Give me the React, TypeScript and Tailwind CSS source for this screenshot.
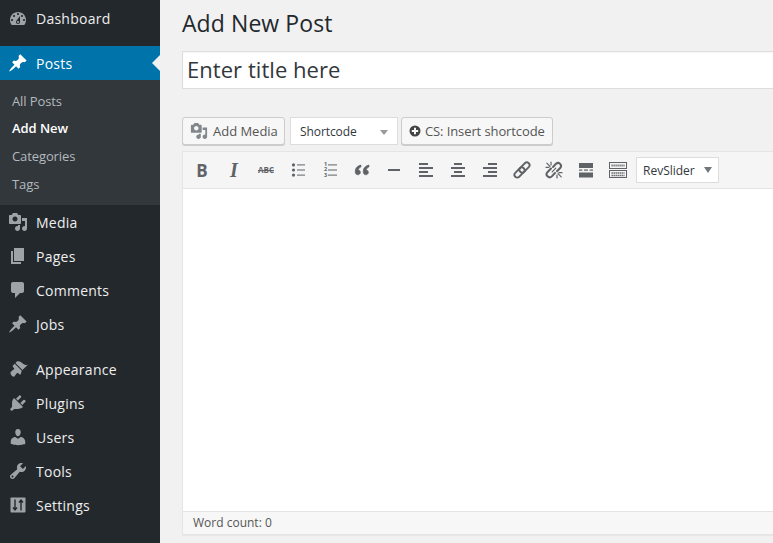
import React from "react";

const paths: Record<string, string> = {
  dashboard:
    "M3.76 16h12.48c1.1-1.37 1.76-3.11 1.76-5 0-4.42-3.58-8-8-8s-8 3.58-8 8c0 1.89.66 3.63 1.76 5zM10 4c.55 0 1 .45 1 1s-.45 1-1 1-1-.45-1-1 .45-1 1-1zM6 6c.55 0 1 .45 1 1s-.45 1-1 1-1-.45-1-1 .45-1 1-1zm8 0c.55 0 1 .45 1 1s-.45 1-1 1-1-.45-1-1 .45-1 1-1zm-5.37 5.55L12 7v6c0 1.1-.9 2-2 2s-2-.9-2-2c0-.57.24-1.08.63-1.45zM4 10c.55 0 1 .45 1 1s-.45 1-1 1-1-.45-1-1 .45-1 1-1zm12 0c.55 0 1 .45 1 1s-.45 1-1 1-1-.45-1-1 .45-1 1-1zm-5 3c0-.55-.45-1-1-1s-1 .45-1 1 .45 1 1 1 1-.45 1-1z",
  pin: "M10.44 3.02l1.82-1.82 6.36 6.35-1.83 1.82c-1.05-.68-2.48-.57-3.41.36l-.75.75c-.92.93-1.04 2.35-.35 3.41l-1.83 1.82-2.41-2.41-2.8 2.79c-.42.42-3.38 2.71-3.8 2.29s1.86-3.39 2.28-3.81l2.79-2.79L4.1 9.36l1.83-1.82c1.05.69 2.48.57 3.4-.36l.75-.75c.93-.92 1.05-2.35.36-3.41z",
  media:
    "M13 11V4c0-.55-.45-1-1-1h-1.67L9 1H5L3.67 3H2c-.55 0-1 .45-1 1v7c0 .55.45 1 1 1h10c.55 0 1-.45 1-1zM7 4.5c1.38 0 2.5 1.12 2.5 2.5S8.38 9.5 7 9.5 4.5 8.38 4.5 7 5.62 4.5 7 4.5zM14 6h5v10.5c0 1.38-1.12 2.5-2.5 2.5S14 17.88 14 16.5s1.12-2.5 2.5-2.5c.17 0 .34.02.5.05V9h-3V6zm-4 8.05V13h2v3.5c0 1.38-1.12 2.5-2.5 2.5S7 17.88 7 16.5 8.12 14 9.5 14c.17 0 .34.02.5.05z",
  pages: "M6 15V2h10v13H6zm-1 1h8v2H3V5h2v11z",
  comments:
    "M5 2h9c1.1 0 2 .9 2 2v7c0 1.1-.9 2-2 2h-2l-5 5v-5H5c-1.1 0-2-.9-2-2V4c0-1.1.9-2 2-2z",
  appearance:
    "M14.48 11.06L7.41 3.99l1.5-1.5c.5-.56 2.3-.47 3.51.32 1.21.8 1.43 1.28 2.91 2.1 1.18.64 2.45 1.26 4.45.85zm-.71.71L6.7 4.7 4.93 6.47c-.39.39-.39 1.02 0 1.41l1.06 1.06c.39.39.39 1.03 0 1.42-.6.6-1.43 1.11-2.21 1.69-.35.26-.7.53-1.01.84C1.43 14.84 5.16 18.57 6.31 17.43c.31-.31.58-.66.84-1.01.58-.78 1.09-1.61 1.69-2.21.39-.39 1.03-.39 1.42 0l1.06 1.06c.39.39 1.02.39 1.41 0z",
  plugins:
    "M13.11 4.36L9.87 7.6 8 5.73l3.24-3.24c.35-.34 1.05-.2 1.56.32.52.51.66 1.21.31 1.55zm-8 1.77l.91-1.12 9.01 9.01-1.19.84c-.71.71-2.63 1.16-3.82 1.16H6.14L4.9 17.26c-.59.59-1.54.59-2.12 0-.59-.58-.59-1.53 0-2.12l1.24-1.24v-3.88c0-1.13.4-3.19 1.09-3.89zm7.26 3.97l3.24-3.24c.34-.35 1.04-.21 1.55.31.52.51.66 1.21.31 1.55l-3.24 3.25z",
  users:
    "M10 9.25c-2.27 0-2.73-3.44-2.73-3.44C7 4.02 7.82 2 9.97 2c2.16 0 2.98 2.02 2.71 3.81 0 0-.41 3.44-2.68 3.44zm0 2.57L12.72 10c2.39 0 4.52 2.33 4.52 4.53v2.49s-3.65 1.13-7.24 1.13c-3.65 0-7.24-1.13-7.24-1.13v-2.49c0-2.25 1.94-4.48 4.47-4.48z",
  tools:
    "M16.68 9.77c-1.34 1.34-3.3 1.67-4.95.99l-5.41 6.52c-.99.99-2.59.99-3.58 0s-.99-2.59 0-3.57l6.52-5.42c-.68-1.65-.35-3.61.99-4.95 1.28-1.28 3.12-1.62 4.72-1.06l-2.89 2.89 2.82 2.82 2.86-2.87c.53 1.58.18 3.39-1.08 4.65zM3.81 16.21c.4.39 1.04.39 1.43 0 .4-.4.4-1.04 0-1.43-.39-.4-1.03-.4-1.43 0-.39.39-.39 1.03 0 1.43z",
};

function Dash({ name, className }: { name: string; className: string }) {
  if (name === "settings") {
    return (
      <svg viewBox="0 0 20 20" className={className}>
        <rect x="2.5" y="2.5" width="15" height="15" rx="0.8" fill="currentColor" />
        <path d="M7 4.5v10.5M5 12.5l2 2.5 2-2.5M13 15.5V5M11 7.5l2-2.5 2 2.5" fill="none" stroke="#23282d" strokeWidth="1.4" />
      </svg>
    );
  }
  return (
    <svg viewBox="0 0 20 20" className={className} fill="currentColor" fillRule="evenodd">
      <path d={paths[name]} />
    </svg>
  );
}

function MenuItem({ icon, label, active, raised }: { icon: string; label: string; active?: boolean; raised?: boolean }) {
  return (
    <div
      className={
        active
          ? "relative flex h-[34px] items-center bg-[#0073aa] text-white"
          : "flex h-[34px] items-center text-[#eeeeee]"
      }
    >
      <div className="flex w-[36px] justify-center">
        <Dash name={icon} className={active ? "h-5 w-5 text-white" : "h-5 w-5 text-[#9ea3a8]"} />
      </div>
      <span className={raised ? "text-[14px] leading-[18px] tracking-[0.25px]" : "mt-[2px] text-[14px] leading-[18px] tracking-[0.25px]"}>{label}</span>
      {active && (
        <div className="absolute right-0 top-[9px] h-0 w-0 border-y-[8px] border-r-[8px] border-y-transparent border-r-[#f1f1f1]" />
      )}
    </div>
  );
}

function SubItem({ label, current }: { label: string; current?: boolean }) {
  return (
    <div
      className={
        current
          ? "flex h-[27.6px] items-center pl-[12px] pt-[1px] text-[13px] font-semibold tracking-[-0.05px] text-white"
          : "flex h-[27.6px] items-center pl-[12px] pt-[1px] text-[13px] tracking-[-0.1px] text-[#b4b9be]"
      }
    >
      {label}
    </div>
  );
}

function Tool({ children }: { children: React.ReactNode }) {
  return (
    <div className="flex h-[26px] w-[32px] items-center justify-center text-[#5f6367]">{children}</div>
  );
}

function Lines({ rows }: { rows: [number, number][] }) {
  return (
    <svg viewBox="0 0 20 20" className="h-5 w-5" fill="currentColor">
      {rows.map(([x, w], i) => (
        <rect key={i} x={x} y={3 + i * 4} width={w} height={2} />
      ))}
    </svg>
  );
}

export default function App() {
  return (
    <div className="flex h-[543px] w-[773px] overflow-hidden bg-[#f1f1f1] font-['Open_Sans',sans-serif]">
      <aside className="w-[160px] shrink-0 bg-[#23282d] pt-[2px]">
        <div className="mb-[10px]">
          <MenuItem icon="dashboard" label="Dashboard" raised />
        </div>
        <MenuItem icon="pin" label="Posts" active />
        <div className="bg-[#32373c] pb-[7.3px] pt-[7.3px]">
          <SubItem label="All Posts" />
          <SubItem label="Add New" current />
          <SubItem label="Categories" />
          <SubItem label="Tags" />
        </div>
        <MenuItem icon="media" label="Media" />
        <MenuItem icon="pages" label="Pages" />
        <MenuItem icon="comments" label="Comments" />
        <MenuItem icon="pin" label="Jobs" />
        <div className="h-[11px]" />
        <MenuItem icon="appearance" label="Appearance" />
        <MenuItem icon="plugins" label="Plugins" />
        <MenuItem icon="users" label="Users" />
        <MenuItem icon="tools" label="Tools" />
        <MenuItem icon="settings" label="Settings" />
      </aside>

      <main className="min-w-0 flex-1 overflow-hidden pl-[22px]">
        <div className="w-[700px]">
          <h1 className="h-[51px] pt-[8px] text-[23px] leading-[31px] tracking-[0.08px] text-[#23282d]">Add New Post</h1>

          <div className="flex h-[38px] items-center border border-[#dddddd] bg-white pb-[2px] pl-[4px] text-[22px] tracking-[0.05px] text-[#32373c] shadow-[inset_0_1px_2px_rgba(0,0,0,0.04)]">
            Enter title here
          </div>

          <div className="mt-[28px] flex h-[28px] items-stretch text-[13px] text-[#555555]">
            <div className="flex w-[103px] items-center rounded-[3px] border border-[#cccccc] bg-[#f7f7f7] pl-[7px] shadow-[0_1px_0_#cccccc]">
              <Dash name="media" className="mr-[5px] h-[18px] w-[18px] text-[#82878c]" />
              <span className="mt-[2px] tracking-[-0.02px]">Add Media</span>
            </div>
            <div className="ml-[5px] flex w-[108px] items-center justify-between border border-[#dddddd] bg-white pl-[9px] pr-[9px] text-[12px] text-[#32373c]">
              <span className="mt-[2px] tracking-[-0.08px]">Shortcode</span>
              <div className="mt-[3px] h-0 w-0 border-x-[4px] border-t-[5px] border-x-transparent border-t-[#999999]" />
            </div>
            <div className="ml-[3px] flex w-[152px] items-center rounded-[3px] border border-[#cccccc] bg-[#f7f7f7] pl-[7px] shadow-[0_1px_0_#cccccc]">
              <svg viewBox="0 0 12 12" className="mr-[4px] h-[12px] w-[12px] text-[#444444]">
                <circle cx="6" cy="6" r="5.5" fill="currentColor" />
                <path d="M5 2.8h2V5h2.2v2H7v2.2H5V7H2.8V5H5z" fill="#f7f7f7" />
              </svg>
              <span className="mt-[2px] tracking-[-0.1px]">CS: Insert shortcode</span>
            </div>
          </div>

          <div className="mt-[6px] border border-[#e5e5e5] bg-white shadow-[0_1px_1px_rgba(0,0,0,0.04)]">
            <div className="flex h-[37px] items-center border-b border-[#e5e5e5] bg-[#f5f5f5] pl-[3px]">
              <Tool>
                <span className="text-[17px] font-bold leading-none">B</span>
              </Tool>
              <Tool>
                <span className="font-['Liberation_Serif',serif] text-[20px] font-bold italic leading-none">I</span>
              </Tool>
              <Tool>
                <span className="text-[8px] font-bold leading-none line-through">ABC</span>
              </Tool>
              <Tool>
                <svg viewBox="0 0 20 20" className="h-5 w-5" fill="currentColor">
                  <circle cx="5.5" cy="4.9" r="1.6" />
                  <circle cx="5.5" cy="10" r="1.6" />
                  <circle cx="5.5" cy="15.1" r="1.6" />
                  <rect x="9" y="4.4" width="8" height="1" />
                  <rect x="9" y="9.5" width="8" height="1" />
                  <rect x="9" y="14.6" width="8" height="1" />
                </svg>
              </Tool>
              <Tool>
                <div className="flex h-5 w-5 items-center pl-[4px]">
                  <span className="w-[4px] break-all text-[5.5px] font-bold leading-[5.2px]">123</span>
                  <svg viewBox="0 0 9 12" className="h-[12px] w-[9px]" fill="currentColor">
                    <rect x="0" y="0.4" width="9" height="1" />
                    <rect x="0" y="5.5" width="9" height="1" />
                    <rect x="0" y="10.6" width="9" height="1" />
                  </svg>
                </div>
              </Tool>
              <Tool>
                <svg viewBox="0 0 20 20" className="h-5 w-5" fill="currentColor" stroke="currentColor" strokeWidth="0.6">
                  <path d="M9 5C5.5 5.8 3.2 8 3.2 11.5c0 2.2 1.1 3.3 2.6 3.3 1.5 0 2.6-1 2.6-2.5 0-1.4-.9-2.3-2.2-2.4.3-1.3 1.3-2.4 2.8-3zM17 5c-3.5.8-5.8 3-5.8 6.5 0 2.2 1.1 3.3 2.6 3.3 1.5 0 2.6-1 2.6-2.5 0-1.4-.9-2.3-2.2-2.4.3-1.3 1.3-2.4 2.8-3z" />
                </svg>
              </Tool>
              <Tool>
                <svg viewBox="0 0 20 20" className="h-5 w-5" fill="currentColor">
                  <rect x="4" y="9" width="12" height="2" />
                </svg>
              </Tool>
              <Tool>
                <Lines rows={[[3, 9], [3, 14], [3, 9], [3, 14]]} />
              </Tool>
              <Tool>
                <Lines rows={[[6, 8], [3, 14], [6, 8], [3, 14]]} />
              </Tool>
              <Tool>
                <Lines rows={[[8, 9], [3, 14], [8, 9], [3, 14]]} />
              </Tool>
              <Tool>
                <svg viewBox="0 0 20 20" className="h-5 w-5" fill="none" stroke="currentColor" strokeWidth="1.8">
                  <rect x="1.5" y="9.7" width="12" height="5.6" rx="2.8" transform="rotate(-45 7.5 12.5)" />
                  <rect x="6.5" y="4.7" width="12" height="5.6" rx="2.8" transform="rotate(-45 12.5 7.5)" />
                </svg>
              </Tool>
              <Tool>
                <svg viewBox="0 0 20 20" className="h-5 w-5" fill="none" stroke="currentColor" strokeWidth="2" strokeLinecap="round">
                  <path d="M7 8.5L3.6 12a3 3 0 0 0 4.2 4.4L11 13" />
                  <path d="M9 7l3.2-3.4a3 3 0 0 1 4.2 4.2L13 11.3" />
                  <path d="M2.8 3.2L6 6.4M2 7.3h3M7 2v3M17.2 16.8L14 13.6M18 12.7h-3M13 18v-3M8.2 11.8l3.6-3.6" strokeWidth="1.2" />
                </svg>
              </Tool>
              <Tool>
                <svg viewBox="0 0 20 20" className="h-5 w-5" fill="currentColor">
                  <rect x="3" y="3" width="14" height="5" />
                  <rect x="3" y="9.5" width="3.4" height="1.2" />
                  <rect x="8" y="9.5" width="4" height="1.2" />
                  <rect x="13.6" y="9.5" width="3.4" height="1.2" />
                  <rect x="3" y="12.5" width="14" height="5" />
                </svg>
              </Tool>
              <Tool>
                <svg viewBox="0 0 20 20" className="h-5 w-5" fill="none" stroke="currentColor" strokeWidth="1">
                  <rect x="1.5" y="2.5" width="17" height="6" />
                  <rect x="1.5" y="10.5" width="17" height="7" />
                  <path d="M3.5 5.5h13" strokeWidth="2" strokeDasharray="1.2 0.8" />
                  <path d="M3.5 13h13M3.5 15.5h13" strokeWidth="1.5" strokeDasharray="1.4 0.6" />
                </svg>
              </Tool>
              <div className="ml-[2px] flex h-[26px] w-[83px] items-center justify-between border border-[#dddddd] bg-white pl-[6px] pr-[6px] text-[12px] text-[#32373c]">
                <span className="mt-[2px]">RevSlider</span>
                <div className="h-0 w-0 border-x-[4.5px] border-t-[6px] border-x-transparent border-t-[#72777c]" />
              </div>
            </div>
            <div className="h-[322px] bg-white" />
            <div className="flex h-[23px] items-center border-t border-[#e5e5e5] bg-[#f7f7f7] pl-[10px] text-[12px] text-[#555555]">
              Word count: 0
            </div>
          </div>
        </div>
      </main>
    </div>
  );
}
